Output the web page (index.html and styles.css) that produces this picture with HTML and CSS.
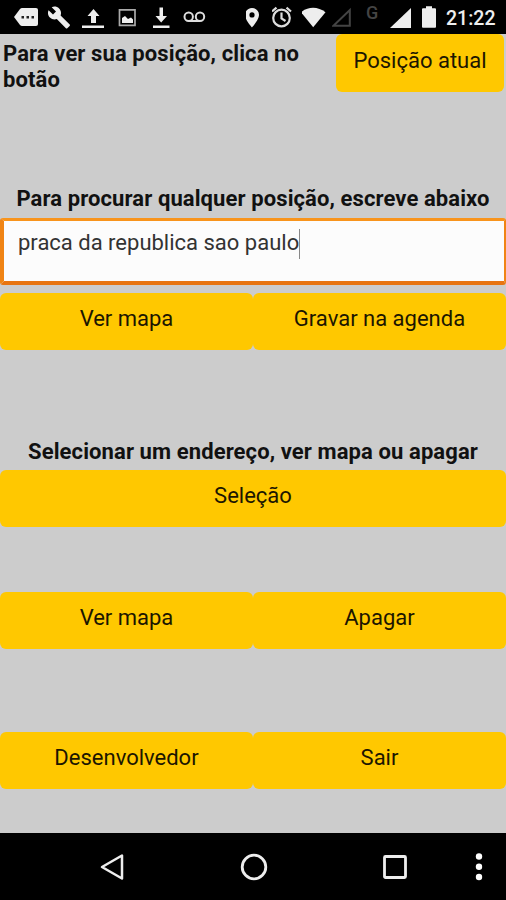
FILE: index.html
```html
<!DOCTYPE html>
<html lang="pt-BR">
<head>
    <meta charset="UTF-8">
    <meta name="viewport" content="width=device-width, initial-scale=1.0">
    <title>Mapa e agenda</title>
    <link rel="stylesheet" href="styles.css">
</head>
<body>

<div class="status-bar">
    <div class="icons">
        <svg width="34" height="34" viewBox="0 0 34 34"><path fill="#eee" d="M8 8h14q2 0 2 2v14q0 2-2 2H8q-1 0-2-1L0 17l6-8q1-1 2-1z"/><path fill="#222" d="M7.500 16H10v2.500H7.500zM12.500 16H15v2.500h-2.500zM17.500 16H20v2.500h-2.500z"/></svg>
        <svg width="34" height="34" viewBox="0 0 34 34"><path fill="#eee" transform="translate(-1 5.500)" d="M22.700 19l-9.100-9.100c.9-2.300.4-5-1.500-6.900-2-2-5-2.400-7.400-1.300L9 6 6 9 1.600 4.700C.4 7.100.9 10.100 2.900 12.100c1.900 1.900 4.600 2.400 6.900 1.500l9.100 9.100c.4.4 1 .4 1.400 0l2.300-2.300c.5-.4.5-1.100.1-1.400z"/></svg>
        <svg width="36" height="34" viewBox="0 0 36 34"><path fill="#eee" d="M0 25.500h22V28H0zM9 23v-7H5.500L11.500 9l6 7H14v7z"/></svg>
        <svg width="35" height="34" viewBox="0 0 35 34"><path fill="none" stroke="#aaa" stroke-width="1.700" d="M1.500 9.800h15.500v15.500H1.500z"/><path fill="#eee" d="M4 23v-5l3-2 3 3 3-1.500 2 2V23z"/></svg>
        <svg width="30" height="34" viewBox="0 0 30 34"><path fill="#eee" d="M0 25.500h16.500V28H0zM6.500 7.500h3.500V16h4l-5.800 6.500L2.500 16h4z"/></svg>
        <svg width="24" height="34" viewBox="0 0 24 34"><g fill="none" stroke="#ddd" stroke-width="2"><circle cx="5.700" cy="16.700" r="4.200"/><circle cx="17" cy="16.700" r="4.200"/><path d="M5.700 21H17"/></g></svg>
    </div>
    <div class="icons">
        <svg width="26" height="34" viewBox="1 0 26 34"><path fill="#eee" fill-rule="evenodd" d="M7 8c-3.900 0-7 3-7 6.800C0 20 7 27.500 7 27.500s7-7.500 7-12.700C14 11 10.900 8 7 8zm0 4.300a2.600 2.600 0 1 1 0 5.200 2.600 2.600 0 0 1 0-5.200z"/></svg>
        <svg width="30" height="34" viewBox="1 0 30 34"><g fill="none" stroke="#ddd" stroke-width="2.200"><circle cx="10.500" cy="18" r="8.300"/><path d="M10.500 12.500v6l4 2.500M1 11.500l4.500-3.800M15.500 7.700l4.500 3.800"/></g></svg>
        <svg width="30" height="34" viewBox="1 0 30 34"><path fill="#eee" d="M0 12.300C7 6.300 17 6.300 24.500 12.300L12.200 27.300z"/></svg>
        <svg width="34" height="34" viewBox="1 0 34 34"><path fill="none" stroke="#444" stroke-width="2" d="M2.500 25.700H18.800V10z"/></svg>
        <span class="network">G</span>
        <svg width="32" height="34" viewBox="0 0 32 34"><path fill="#eee" d="M0 28L21 8v20z"/></svg>
        <svg width="24" height="34" viewBox="0 0 24 34"><path fill="#eee" d="M1 8.300h3V6.300h6v2h3q1 0 1 1V27q0 .8-1 .8H1q-1 0-1-.8V9.300q0-1 1-1z"/></svg>
        <span class="clock">21:22</span>
    </div>
</div>

<div class="screen">
    <div class="top">
        <div class="label">Para ver sua posição, clica no botão</div>
        <button class="btn btn-top">Posição atual</button>
    </div>

    <div class="section search">
        <div class="label center">Para procurar qualquer posição, escreve abaixo</div>
        <div class="field"><span class="value">praca da republica sao paulo</span></div>
        <div class="row">
            <button class="btn">Ver mapa</button>
            <button class="btn">Gravar na agenda</button>
        </div>
    </div>

    <div class="section select">
        <div class="label center">Selecionar um endereço, ver mapa ou apagar</div>
        <div class="row">
            <button class="btn">Seleção</button>
        </div>
    </div>

    <div class="row actions">
        <button class="btn">Ver mapa</button>
        <button class="btn">Apagar</button>
    </div>

    <div class="row footer">
        <button class="btn">Desenvolvedor</button>
        <button class="btn">Sair</button>
    </div>
</div>

<div class="nav-bar">
    <svg width="26" height="30" viewBox="0 0 26 30"><path fill="none" stroke="#eee" stroke-width="2.500" stroke-linejoin="round" d="M2 15L22 3.500v23z"/></svg>
    <svg width="28" height="30" viewBox="0 0 28 30"><circle cx="14" cy="15" r="11.800" fill="none" stroke="#eee" stroke-width="2.800"/></svg>
    <svg width="26" height="30" viewBox="0 0 26 30"><rect x="2.500" y="4.500" width="21" height="21" rx="1" fill="none" stroke="#eee" stroke-width="2.800"/></svg>
    <svg class="more" width="8" height="30" viewBox="0 0 8 30"><g fill="#fff"><circle cx="4" cy="4.500" r="3.200"/><circle cx="4" cy="14.800" r="3.200"/><circle cx="4" cy="25" r="3.200"/></g></svg>
</div>

</body>
</html>
```
FILE: styles.css
```css
* { box-sizing: border-box; }
body { margin: 0; height: 900px; display: flex; flex-direction: column; overflow: hidden; font-family: Roboto, sans-serif; background: #000; color: #111; }
svg { display: block; flex: none; }

.status-bar { display: flex; justify-content: space-between; height: 34px; padding: 0 11px 0 14px; background: #000; }
.icons { display: flex; }
.network { width: 24px; padding-top: 3px; font-size: 18px; line-height: 20px; font-weight: 500; color: #444; }
.clock { width: 49px; font-size: 19.5px; line-height: 37px; font-weight: 500; color: #eee; white-space: nowrap; }

.screen { height: 799px; background: #ccc; }
.top { display: flex; justify-content: space-between; padding: 0 2px 0 3px; }
.top .label { width: 320px; padding-top: 7px; }
.label { font-size: 22px; line-height: 26px; font-weight: 700; letter-spacing: 0.1px; }
.center { text-align: center; white-space: nowrap; }

.btn { flex: 1; height: 57px; padding: 0 0 5px; border: none; border-radius: 6px; background: #ffc800; color: #1c1600; font-family: inherit; font-size: 22px; line-height: 26px; cursor: pointer; }
.btn-top { flex: none; width: 168px; height: 58px; }
.row { display: flex; }

.search { margin-top: 93px; }
.field { height: 67px; margin: 6px 0 8px; padding: 8px 14px; border: 3px solid #f08414; border-width: 3px 2px 4px 4px; border-color: #f8941c #f08414 #e87410 #f08414; border-radius: 3px; background: #fcfcfc; font-size: 22px; line-height: 27px; color: #333; }
.value { display: inline-block; height: 30px; border-right: 1px solid #888; }
.select { margin-top: 89px; }
.select .label { margin-bottom: 5px; }
.actions { margin-top: 65px; }
.footer { margin-top: 83px; }

.nav-bar { display: flex; align-items: center; gap: 114px; height: 67px; padding: 0 24px 0 100px; background: #000; }
.more { margin-left: -47px; }
```
